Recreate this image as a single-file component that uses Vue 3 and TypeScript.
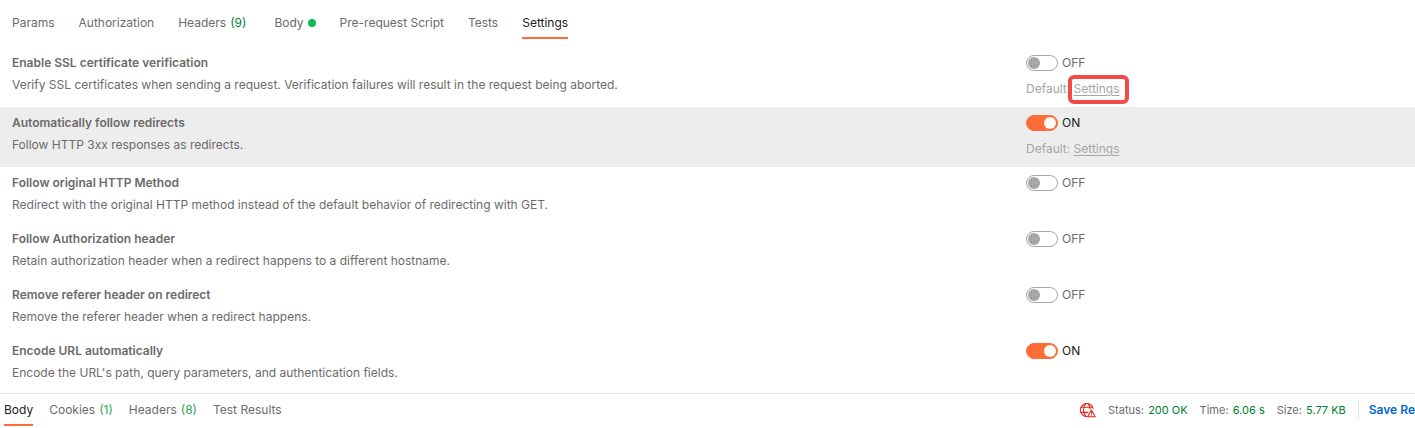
<script setup lang="ts">
import { ref } from 'vue'

interface Tab {
  name: string
  count?: number
  dot?: boolean
}

interface Setting {
  id: string
  title: string
  description: string
  on: boolean
  hasDefault?: boolean
  marked?: boolean
  shaded?: boolean
}

const requestTabs: Tab[] = [
  { name: 'Params' },
  { name: 'Authorization' },
  { name: 'Headers', count: 9 },
  { name: 'Body', dot: true },
  { name: 'Pre-request Script' },
  { name: 'Tests' },
  { name: 'Settings' },
]

const responseTabs: Tab[] = [
  { name: 'Body' },
  { name: 'Cookies', count: 1 },
  { name: 'Headers', count: 8 },
  { name: 'Test Results' },
]

const stats = [
  { label: 'Status:', value: '200 OK' },
  { label: 'Time:', value: '6.06 s' },
  { label: 'Size:', value: '5.77 KB' },
]

const activeRequestTab = ref('Settings')
const activeResponseTab = ref('Body')

const settings = ref<Setting[]>([
  {
    id: 'ssl',
    title: 'Enable SSL certificate verification',
    description:
      'Verify SSL certificates when sending a request. Verification failures will result in the request being aborted.',
    on: false,
    hasDefault: true,
    marked: true,
  },
  {
    id: 'redirects',
    title: 'Automatically follow redirects',
    description: 'Follow HTTP 3xx responses as redirects.',
    on: true,
    hasDefault: true,
    shaded: true,
  },
  {
    id: 'method',
    title: 'Follow original HTTP Method',
    description: 'Redirect with the original HTTP method instead of the default behavior of redirecting with GET.',
    on: false,
  },
  {
    id: 'authorization',
    title: 'Follow Authorization header',
    description: 'Retain authorization header when a redirect happens to a different hostname.',
    on: false,
  },
  {
    id: 'referer',
    title: 'Remove referer header on redirect',
    description: 'Remove the referer header when a redirect happens.',
    on: false,
  },
  {
    id: 'encode',
    title: 'Encode URL automatically',
    description: "Encode the URL's path, query parameters, and authentication fields.",
    on: true,
  },
])
</script>

<template>
  <div class="pane">
    <nav class="request-tabs">
      <button
        v-for="tab in requestTabs"
        :key="tab.name"
        type="button"
        class="tab"
        :class="{ active: tab.name === activeRequestTab }"
        @click="activeRequestTab = tab.name"
      >
        {{ tab.name }}
        <span v-if="tab.count" class="count">({{ tab.count }})</span>
        <span v-if="tab.dot" class="dot"></span>
      </button>
    </nav>

    <main class="settings">
      <section v-for="item in settings" :key="item.id" class="row" :class="{ shaded: item.shaded }">
        <div class="info">
          <label class="title" :for="item.id">{{ item.title }}</label>
          <p class="description">{{ item.description }}</p>
        </div>
        <div class="control">
          <label class="switch" :class="{ on: item.on }">
            <input :id="item.id" v-model="item.on" type="checkbox" />
            {{ item.on ? 'ON' : 'OFF' }}
          </label>
          <div v-if="item.hasDefault" class="default">
            Default:
            <span class="link-wrap" :class="{ marked: item.marked }"><a href="#">Settings</a></span>
          </div>
        </div>
      </section>
    </main>

    <footer class="response">
      <nav class="response-tabs">
        <button
          v-for="tab in responseTabs"
          :key="tab.name"
          type="button"
          class="tab"
          :class="{ active: tab.name === activeResponseTab }"
          @click="activeResponseTab = tab.name"
        >
          {{ tab.name }}
          <span v-if="tab.count" class="count light">({{ tab.count }})</span>
        </button>
      </nav>
      <div class="summary">
        <svg class="globe" viewBox="0 0 17 16" width="17" height="16" fill="none" stroke="#e5231b" stroke-width="1.1">
          <path d="M8.4 14.5A6.5 6.5 0 1 1 14.2 6.9" />
          <path d="M6.8 14.3C3.8 11 3.8 5 6.8 1.7M8.8 1.7C10.4 3.2 11.1 5 11.1 7.2" />
          <path d="M2 5.2H13.6M1.6 10.4H9.4" />
          <path d="M12.4 8L16.2 14.8H8.6Z" stroke-linejoin="round" />
          <path d="M12.4 10.2V12.2M12.4 12.8V13.8" />
        </svg>
        <div v-for="stat in stats" :key="stat.label" class="stat">
          {{ stat.label }} <span class="value">{{ stat.value }}</span>
        </div>
        <button type="button" class="save">Save Re</button>
      </div>
    </footer>
  </div>
</template>

<style>
body {
  margin: 0;
  background: #fff;
}
</style>

<style scoped>
.pane {
  font-family: Inter, "Liberation Sans", sans-serif;
  font-size: 12px;
  line-height: 16px;
  color: #6b6b6b;
  overflow: hidden;
}

button {
  font: inherit;
  color: inherit;
  background: none;
  border: 0;
  padding: 0;
  white-space: nowrap;
  cursor: pointer;
}

.request-tabs {
  display: flex;
  gap: 24px;
  padding: 7px 12px 8px;
}

.request-tabs .count {
  margin-right: 4px;
}

.tab {
  display: flex;
  align-items: center;
  gap: 4px;
  padding: 8px 0 6px;
  border-bottom: 2px solid transparent;
}

.tab.active {
  color: #212121;
  border-bottom-color: #ff6c37;
}

.count {
  color: #007f31;
}

.count.light {
  color: #29a84a;
}

.dot {
  width: 8px;
  height: 8px;
  border-radius: 50%;
  background: #0cbb52;
}

.row {
  display: grid;
  grid-template-columns: 1fr 389px;
  padding: 8px 0 10px 12px;
}

.row.shaded {
  background: #ededed;
}

.info {
  display: flex;
  flex-direction: column;
  align-items: flex-start;
  gap: 6px;
}

.title {
  font-weight: 600;
}

.description {
  margin: 0;
}

.control {
  display: flex;
  flex-direction: column;
  align-items: flex-start;
  gap: 10px;
}

.switch {
  display: flex;
  align-items: center;
  gap: 4px;
}

.switch.on {
  color: #212121;
}

.switch input {
  appearance: none;
  box-sizing: border-box;
  display: flex;
  align-items: center;
  width: 32px;
  height: 16px;
  margin: 0;
  padding: 0 1px;
  border: 1px solid #a6a6a6;
  border-radius: 8px;
  background: #fff;
}

.switch input::before {
  content: "";
  width: 12px;
  height: 12px;
  border-radius: 50%;
  background: #a6a6a6;
}

.switch input:checked {
  justify-content: flex-end;
  border-color: #ff6c37;
  background: #ff6c37;
}

.switch input:checked::before {
  background: #fff;
}

.default {
  color: #a6a6a6;
}

.default a {
  color: inherit;
  text-decoration: underline;
  text-underline-offset: 2px;
}

.link-wrap {
  display: inline-block;
  position: relative;
}

.link-wrap.marked::after {
  content: "";
  position: absolute;
  inset: -6px -9px -7px -6px;
  border: 4px solid #f24a46;
  border-radius: 6px;
  pointer-events: none;
}

.response {
  display: flex;
  justify-content: space-between;
  margin-top: 2px;
  border-top: 1px solid #e6e6e6;
}

.response-tabs {
  display: flex;
  gap: 16px;
  padding-left: 4px;
}

.summary {
  display: flex;
  align-items: center;
  gap: 12px;
  height: 32px;
}

.stat {
  font-size: 11px;
  white-space: nowrap;
}

.value {
  color: #007f31;
  margin-left: 1px;
}

.save {
  height: 20px;
  padding-left: 10px;
  border-left: 1px solid #e6e6e6;
  font-weight: 600;
  color: #0265d2;
}
</style>
